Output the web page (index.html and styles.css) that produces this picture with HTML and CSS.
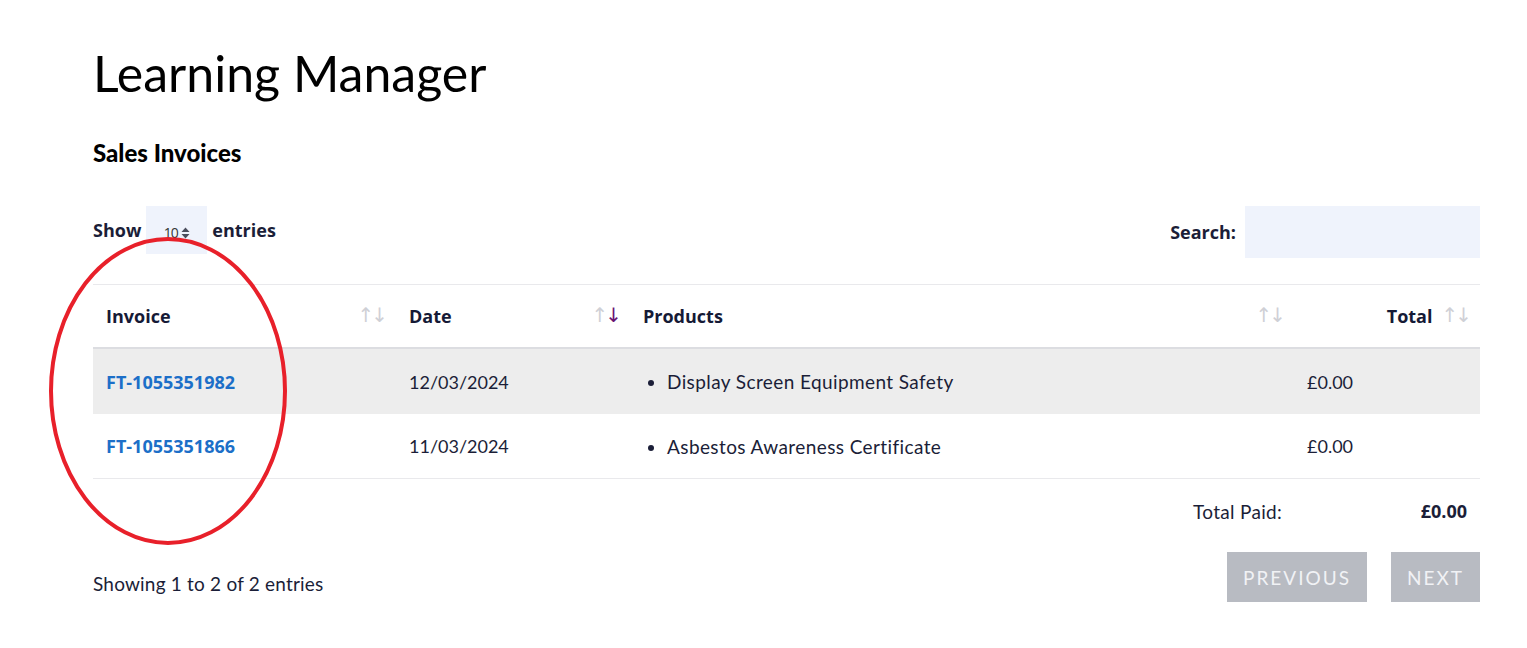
FILE: index.html
```html
<!DOCTYPE html>
<html lang="en">
<head>
<meta charset="utf-8">
<title>Learning Manager</title>
<link rel="stylesheet" href="styles.css">
</head>
<body>
<main class="page">
  <h1 class="title">Learning Manager</h1>
  <h2 class="subtitle">Sales Invoices</h2>

  <div class="controls">
    <label class="length">Show
      <span class="select">10<svg class="caret" width="9" height="12" viewBox="0 0 9 12"><path d="M4.5 0.5 L8.5 5 L0.5 5 Z" fill="#4a4d5c"/><path d="M0.5 7 L8.5 7 L4.5 11.5 Z" fill="#4a4d5c"/></svg></span>
      entries</label>
    <label class="search">Search: <span class="search-input"></span></label>
  </div>

  <table class="invoices">
    <colgroup>
      <col class="c-invoice"><col class="c-date"><col class="c-products"><col class="c-total">
    </colgroup>
    <thead>
      <tr>
        <th><div class="th-in"><span>Invoice</span><span class="sort"><i class="up">↑</i><i class="dn">↓</i></span></div></th>
        <th><div class="th-in"><span>Date</span><span class="sort"><i class="up">↑</i><i class="dn active">↓</i></span></div></th>
        <th><div class="th-in"><span>Products</span><span class="sort"><i class="up">↑</i><i class="dn">↓</i></span></div></th>
        <th><div class="th-in th-right"><span>Total</span><span class="sort"><i class="up">↑</i><i class="dn">↓</i></span></div></th>
      </tr>
    </thead>
    <tbody>
      <tr class="odd">
        <td><a class="inv" href="#">FT-1055351982</a></td>
        <td>12/03/2024</td>
        <td><ul class="prod"><li>Display Screen Equipment Safety</li></ul></td>
        <td>£0.00</td>
      </tr>
      <tr>
        <td><a class="inv" href="#">FT-1055351866</a></td>
        <td>11/03/2024</td>
        <td><ul class="prod"><li>Asbestos Awareness Certificate</li></ul></td>
        <td>£0.00</td>
      </tr>
    </tbody>
    <tfoot>
      <tr>
        <td></td><td></td>
        <td class="paid-label">Total Paid:</td>
        <td class="paid-value">£0.00</td>
      </tr>
    </tfoot>
  </table>

  <div class="bottom">
    <div class="info">Showing 1 to 2 of 2 entries</div>
    <div class="pager">
      <span class="btn">PREVIOUS</span>
      <span class="btn">NEXT</span>
    </div>
  </div>

  <svg class="annot" width="250" height="316" viewBox="0 0 250 316"><ellipse cx="125" cy="158" rx="117" ry="152" fill="none" stroke="#e8202a" stroke-width="4"/></svg>
</main>
</body>
</html>
```

FILE: styles.css
```css
html, body {
  margin: 0;
  padding: 0;
  background: #ffffff;
}

body {
  font-family: Lato, "Open Sans", sans-serif;
  color: #1b1e38;
}

.page {
  position: relative;
  width: 1387px;
  padding: 38px 0 0 93px;
}

.title {
  margin: 0;
  font-family: Lato, sans-serif;
  font-weight: 400;
  font-size: 50px;
  line-height: 70px;
  color: #000;
}

.subtitle {
  margin: 31px 0 0;
  font-family: Lato, sans-serif;
  font-weight: 900;
  font-size: 24px;
  line-height: 28px;
  color: #000;
}

.controls {
  margin-top: 39px;
  display: flex;
  justify-content: space-between;
  align-items: flex-start;
  height: 78px;
}

.length, .search {
  display: flex;
  align-items: center;
  font-family: "Open Sans", sans-serif;
  font-weight: 700;
  font-size: 18px;
  color: #1b1e38;
}

.select {
  display: inline-flex;
  align-items: center;
  justify-content: center;
  gap: 3px;
  width: 61px;
  height: 48px;
  margin: 0 5px;
  background: #eff3fc;
  font-family: "Open Sans", sans-serif;
  font-weight: 400;
  font-size: 14px;
  letter-spacing: -1px;
  color: #333;
  padding-top: 4px;
  box-sizing: border-box;
}

.caret { margin-top: 1px; }

.search {
  height: 52px;
}

.search-input {
  display: inline-block;
  width: 235px;
  height: 52px;
  margin-left: 9px;
  background: #eff3fc;
}

.invoices {
  width: 1387px;
  table-layout: fixed;
  border-collapse: collapse;
}

.c-invoice { width: 303px; }
.c-date { width: 234px; }
.c-products { width: 664px; }
.c-total { width: 186px; }

.invoices thead th {
  border-top: 1px solid #e9e9ec;
  border-bottom: 2px solid #dcdde1;
  height: 62px;
  padding: 0 11px 0 13px;
  text-align: left;
  font-family: "Open Sans", sans-serif;
  font-weight: 700;
  font-size: 18px;
  color: #151a36;
}

.th-in {
  display: flex;
  justify-content: space-between;
  align-items: center;
}

.th-right {
  justify-content: flex-end;
  gap: 9px;
}

.sort {
  display: inline-flex;
  font-style: normal;
  font-family: "DejaVu Sans", sans-serif;
  font-weight: 400;
  font-size: 20px;
  line-height: 1;
  margin-top: -3px;
  color: #cfd0d6;
  letter-spacing: -3px;
}

.sort i { font-style: normal; }
.sort .active { color: #6a1473; }

.invoices tbody td {
  height: 64px;
  padding: 0 13px;
  font-family: Lato, sans-serif;
  font-size: 18px;
  color: #1b1e38;
  border-bottom: 1px solid #e9e9ec;
}

.invoices tbody tr.odd td {
  height: 65px;
  background: #ededed;
  border-bottom: none;
}

.inv {
  font-family: "Open Sans", sans-serif;
  font-weight: 700;
  font-size: 18px;
  color: #1c6fc8;
  text-decoration: none;
}

.prod {
  margin: 0;
  padding-left: 24px;
  font-size: 19px;
  letter-spacing: 0.4px;
}

.invoices tfoot td {
  height: 64px;
  padding: 0 13px;
  font-size: 18px;
}

.paid-label {
  text-align: right;
  padding-right: 12px !important;
  font-family: Lato, sans-serif;
  font-size: 19px !important;
  letter-spacing: 0.3px;
}

.paid-value {
  text-align: right;
  font-family: "Open Sans", sans-serif;
  font-weight: 700;
}

.bottom {
  display: flex;
  justify-content: space-between;
  align-items: center;
  margin-top: 9px;
}

.info {
  font-family: Lato, sans-serif;
  font-size: 19px;
  letter-spacing: 0.2px;
  color: #1b1e38;
  padding-top: 13px;
}

.pager {
  display: flex;
  gap: 24px;
}

.btn {
  display: inline-flex;
  align-items: center;
  justify-content: center;
  height: 50px;
  padding: 0 16px;
  background: #b8bbc2;
  color: #f1f2f5;
  font-family: Lato, sans-serif;
  font-size: 19px;
  letter-spacing: 2px;
}

.annot {
  position: absolute;
  left: 43px;
  top: 233px;
  pointer-events: none;
}
```
